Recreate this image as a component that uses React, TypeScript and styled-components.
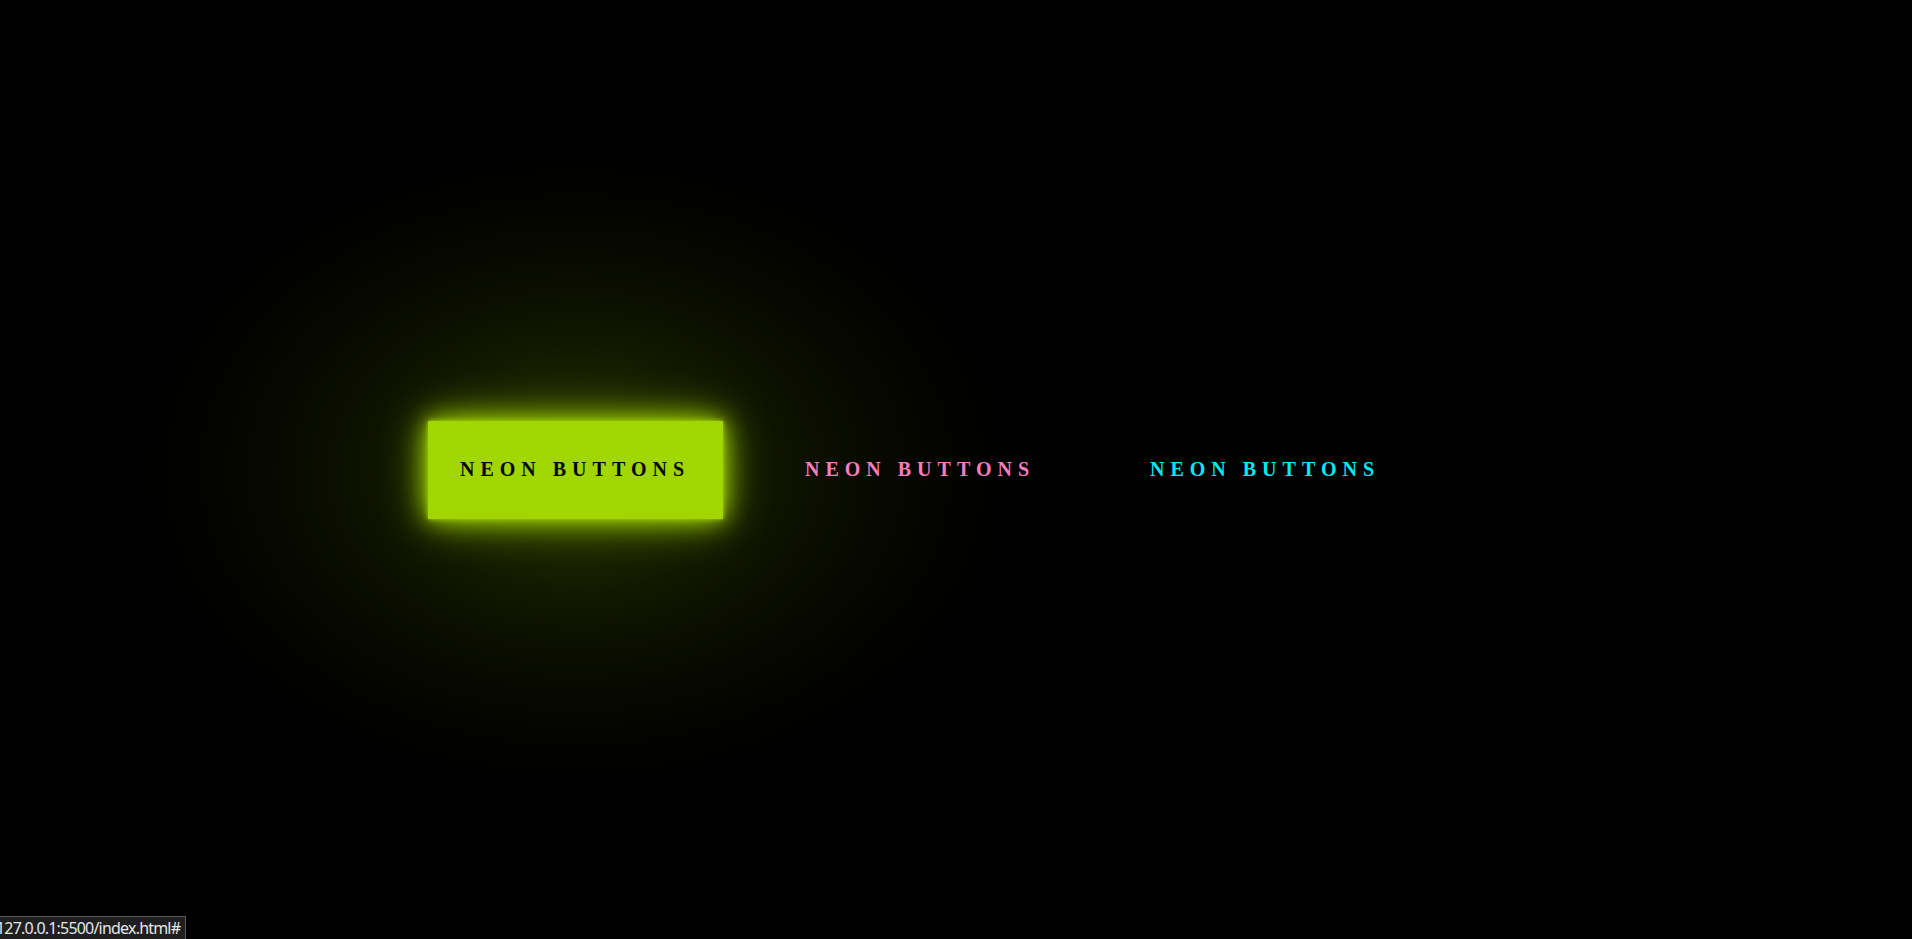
import React from "react";
import styled, { createGlobalStyle, css } from "styled-components";

const GlobalStyle = createGlobalStyle`
  html, body {
    margin: 0;
    padding: 0;
    background: #000;
    overflow: hidden;
  }
`;

const Stage = styled.main`
  position: relative;
  z-index: 0;
  height: 939px;
  display: flex;
  align-items: center;
  padding-left: 428px;
  gap: 50px;
  background: #000;
`;

type Tone = { color: string; glow: string; active?: boolean };

const NeonButton = styled.a<{ $color: string; $glow: string; $active?: boolean }>`
  position: relative;
  display: flex;
  align-items: center;
  box-sizing: border-box;
  width: 295px;
  height: 98px;
  padding: 0 32px;
  font-family: "Liberation Serif", "Times New Roman", serif;
  font-weight: 700;
  font-size: 20px;
  letter-spacing: 6px;
  text-transform: uppercase;
  text-decoration: none;
  white-space: nowrap;
  color: ${(p) => p.$color};
  ${(p) =>
    p.$active &&
    css`
      background: ${p.$color};
      color: #050801;
      box-shadow: 0 0 5px ${p.$color}, 0 0 22px ${p.$color},
        0 0 45px rgba(${p.$glow}, 0.85);

      &::before {
        content: "";
        position: absolute;
        left: 50%;
        top: 50%;
        width: 900px;
        height: 660px;
        transform: translate(-50%, -50%);
        z-index: -1;
        pointer-events: none;
        background: radial-gradient(
          ellipse closest-side at center,
          rgba(${p.$glow}, 0.24) 0%,
          rgba(${p.$glow}, 0.16) 25%,
          rgba(${p.$glow}, 0.105) 40%,
          rgba(${p.$glow}, 0.058) 58%,
          rgba(${p.$glow}, 0.026) 75%,
          rgba(${p.$glow}, 0.008) 90%,
          rgba(${p.$glow}, 0) 100%
        );
      }
    `}
`;

const StatusBubble = styled.div`
  position: fixed;
  left: -4px;
  bottom: -1px;
  height: 22px;
  padding: 0 5px 0 0;
  display: flex;
  align-items: center;
  background: #1f1f1f;
  border: 1px solid #5c5c5c;
  border-left: none;
  color: #e6e6e6;
  font-family: "Noto Sans", "Open Sans", sans-serif;
  font-size: 16px;
  letter-spacing: -0.8px;
`;

const buttons: Tone[] = [
  { color: "#a1d600", glow: "161, 214, 0", active: true },
  { color: "#f77ebd", glow: "247, 126, 189" },
  { color: "#03e9f4", glow: "3, 233, 244" },
];

export default function App() {
  return (
    <>
      <GlobalStyle />
      <Stage>
        {buttons.map((b, i) => (
          <NeonButton key={i} href="#" $color={b.color} $glow={b.glow} $active={b.active}>
            Neon Buttons
          </NeonButton>
        ))}
      </Stage>
      <StatusBubble>127.0.0.1:5500/index.html#</StatusBubble>
    </>
  );
}
